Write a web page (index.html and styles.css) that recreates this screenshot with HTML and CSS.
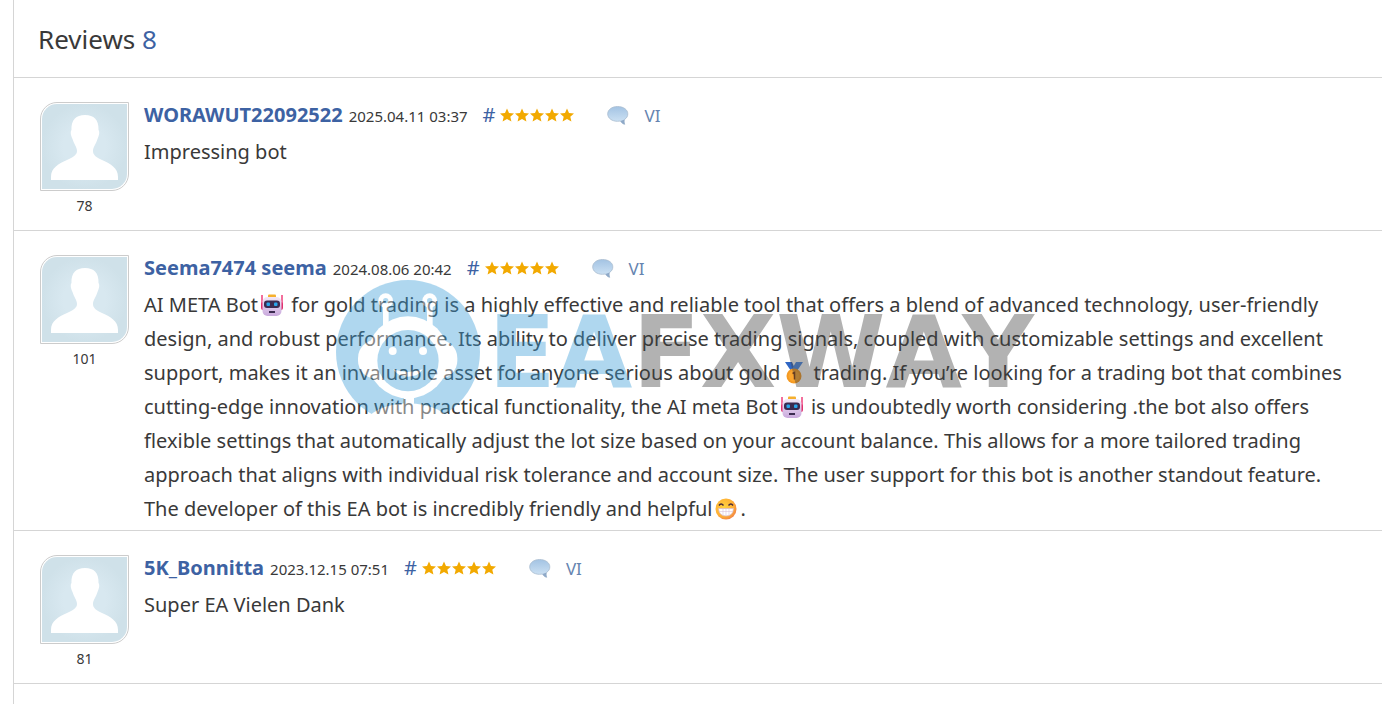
FILE: index.html
```html
<!DOCTYPE html>
<html lang="en">
<head>
<meta charset="UTF-8">
<meta name="viewport" content="width=device-width" />
<title>Reviews</title>
<link rel="stylesheet" href="styles.css">
</head>

<body>
<!-- shapes used more than once -->
<svg class="defs" aria-hidden="true">
  <defs>
    <linearGradient id="bubbleFill" x1="0" y1="0" x2="0" y2="1">
      <stop offset="0" stop-color="#a3c3e3"/>
      <stop offset="1" stop-color="#d3e6f6"/>
    </linearGradient>
    <linearGradient id="robotFill" x1="0" y1="0" x2="0" y2="1">
      <stop offset="0" stop-color="#f3e8f8"/>
      <stop offset="1" stop-color="#c9a9dc"/>
    </linearGradient>
    <radialGradient id="faceFill" cx=".4" cy=".4" r=".65">
      <stop offset="0" stop-color="#ffd340"/>
      <stop offset=".7" stop-color="#ffb035"/>
      <stop offset="1" stop-color="#f08048"/>
    </radialGradient>
    <radialGradient id="avatarFill">
      <stop offset=".5" stop-color="#d8e8f0"/>
      <stop offset="1" stop-color="#cfe1e9"/>
    </radialGradient>
  </defs>
  <symbol id="avatar" viewBox="0 0 89 89">
    <path d="M17 .5H88.500V72A16.500 16.500 0 0 1 72 88.500H.5V17A16.500 16.500 0 0 1 17 .5Z" fill="#fff" stroke="#ccc"/>
    <path d="M17 2H87V72A15 15 0 0 1 72 87H2V17A15 15 0 0 1 17 2Z" fill="url(#avatarFill)"/>
    <path d="M45 13C36 13 31 18 31.500 28C30 30 31 34 32.500 37C34 42 37 45 37 49C37 53 33 55 27 58C18 62 11 66 11 75V78H78V75C78 66 71 62 62 58C56 55 53 53 53 49C53 45 56 42 57.500 37C59 34 60 30 58.500 28C59 18 54 13 45 13Z" fill="#fff"/>
  </symbol>
  <symbol id="stars" viewBox="0 0 75 14">
    <g fill="#f2a900">
      <path id="star" d="M7 0.500L9 5L14 5.500L10.300 8.800L11.400 13.500L7 11L2.600 13.500L3.700 8.800L0 5.500L5 5Z"/>
      <use href="#star" x="15"/>
      <use href="#star" x="30"/>
      <use href="#star" x="45"/>
      <use href="#star" x="60"/>
    </g>
  </symbol>
  <symbol id="bubble" viewBox="0 0 22 20">
    <path d="M10.500 1.500C5 1.500 .7 4.700 .7 8.900C.7 13.200 5 16.300 10.500 16.300L13.500 16C14.500 18 16 19 17.800 19.300C17 17.700 17 16.200 17.500 14.500C19.800 13 20.800 11.200 20.800 8.900C20.800 4.700 16.500 1.500 10.500 1.500Z" fill="url(#bubbleFill)" stroke="#a9bccf" stroke-width=".8"/>
    <path d="M13.500 16C14.500 18 16 19 17.800 19.300C17 17.700 17 16.200 17.500 14.500Z" fill="#8fa9c8"/>
  </symbol>
  <symbol id="robot" viewBox="0 0 24 24">
    <path d="M2 2V12M22 2V12" stroke="#f0407c" stroke-width="1.500"/>
    <rect x="1" y="9" width="22" height="8" rx="2" fill="#e0326e"/>
    <rect x="8" y="1.500" width="8" height="4" rx="1" fill="#f5b02e"/>
    <rect x="2.500" y="4" width="19" height="19" rx="5" fill="url(#robotFill)"/>
    <rect x="4" y="7.500" width="16" height="7.500" rx="3" fill="#3b2b50"/>
    <rect x="6.500" y="9.500" width="3.500" height="3.500" rx="1" fill="#2aa5ea"/>
    <rect x="14" y="9.500" width="3.500" height="3.500" rx="1" fill="#2aa5ea"/>
    <rect x="9" y="18" width="6" height="2" fill="#3b2b50"/>
  </symbol>
</svg>

<main class="panel">
  <h1 class="title">Reviews <span class="count">8</span></h1>

  <article class="review">
    <div class="user">
      <svg class="avatar" role="img" aria-label="WORAWUT22092522"><use href="#avatar"/></svg>
      <span class="rating">78</span>
    </div>
    <div class="content">
      <header class="info">
        <a class="author" href="#worawut">WORAWUT22092522</a>
        <time class="date">2025.04.11 03:37</time>
        <a class="anchor" href="#r1" id="r1">#</a>
        <svg class="stars" role="img" aria-label="5 stars"><use href="#stars"/></svg>
        <svg class="bubble" aria-hidden="true"><use href="#bubble"/></svg>
        <a class="lang" href="#vi">VI</a>
      </header>
      <p class="text">Impressing bot</p>
    </div>
  </article>

  <article class="review">
    <div class="user">
      <svg class="avatar" role="img" aria-label="Seema7474 seema"><use href="#avatar"/></svg>
      <span class="rating">101</span>
    </div>
    <div class="content">
      <header class="info">
        <a class="author" href="#seema">Seema7474 seema</a>
        <time class="date">2024.08.06 20:42</time>
        <a class="anchor" href="#r2" id="r2">#</a>
        <svg class="stars" role="img" aria-label="5 stars"><use href="#stars"/></svg>
        <svg class="bubble" aria-hidden="true"><use href="#bubble"/></svg>
        <a class="lang" href="#vi">VI</a>
      </header>
      <p class="text">AI META Bot<svg class="emoji" role="img" aria-label="robot"><use href="#robot"/></svg>
        for gold trading is a highly effective and reliable tool that offers a blend of advanced technology, user-friendly design, and robust performance. Its ability to deliver precise trading signals, coupled with customizable settings and excellent support, makes it an invaluable asset for anyone serious about gold<svg class="emoji" viewBox="0 0 24 24" role="img" aria-label="gold medal">
          <path d="M3 1H10L13 8L9 10Z" fill="#2f66c4"/>
          <path d="M21 1H14L10 8L15 10Z" fill="#4b8be8"/>
          <circle cx="12" cy="15" r="7.500" fill="#f59a23"/>
          <circle cx="12" cy="15" r="5.500" fill="#fba62f"/>
          <path d="M10.500 12.500L12.500 11.500V18.500" fill="none" stroke="#7d3b10" stroke-width="1.500"/>
        </svg>
        trading. If you’re looking for a trading bot that combines cutting-edge innovation with practical functionality, the AI meta Bot<svg class="emoji" role="img" aria-label="robot"><use href="#robot"/></svg>
        is undoubtedly worth considering .the bot also offers flexible settings that automatically adjust the lot size based on your account balance. This allows for a more tailored trading approach that aligns with individual risk tolerance and account size. The user support for this bot is another standout feature. The developer of this EA bot is incredibly friendly and helpful<svg class="emoji" viewBox="0 0 24 24" role="img" aria-label="beaming face">
          <circle cx="12" cy="12" r="10.500" fill="url(#faceFill)"/>
          <path d="M5 8.500Q7 5.500 9.500 8.500M14.500 8.500Q17 5.500 19 8.500" fill="none" stroke="#4a2b3c" stroke-width="1.500"/>
          <path d="M4.500 11.500H19.500Q19 19 12 19Q5 19 4.500 11.500Z" fill="#fff" stroke="#d9b8c8" stroke-width=".7"/>
          <path d="M5 14.500H19M9 12V18M12 12V19M15 12V18" stroke="#d9c4dc" stroke-width=".6"/>
        </svg>.</p>
    </div>
  </article>

  <article class="review">
    <div class="user">
      <svg class="avatar" role="img" aria-label="5K_Bonnitta"><use href="#avatar"/></svg>
      <span class="rating">81</span>
    </div>
    <div class="content">
      <header class="info">
        <a class="author" href="#bonnitta">5K_Bonnitta</a>
        <time class="date">2023.12.15 07:51</time>
        <a class="anchor" href="#r3" id="r3">#</a>
        <svg class="stars" role="img" aria-label="5 stars"><use href="#stars"/></svg>
        <svg class="bubble" aria-hidden="true"><use href="#bubble"/></svg>
        <a class="lang" href="#vi">VI</a>
      </header>
      <p class="text">Super EA Vielen Dank</p>
    </div>
  </article>
</main>

<div class="watermark">
  <svg class="logo" viewBox="0 0 432 432" aria-hidden="true">
    <circle cx="216" cy="216" r="216" fill="#399dd9"/>
    <g fill="#fff">
      <path d="M141 70H158V140H141ZM273 70H290V140H273Z"/>
      <circle cx="149" cy="62" r="22"/>
      <circle cx="281" cy="62" r="22"/>
      <rect x="66" y="180" width="298" height="116" rx="54"/>
      <circle cx="216" cy="232" r="123"/>
      <path d="M204 345H234V375H204Z"/>
      <ellipse cx="216" cy="432" rx="125" ry="62"/>
    </g>
    <g fill="#399dd9">
      <circle cx="149" cy="62" r="8"/>
      <circle cx="281" cy="62" r="8"/>
      <circle cx="216" cy="242" r="92"/>
    </g>
    <g fill="#fff">
      <circle cx="170" cy="213" r="12"/>
      <circle cx="261" cy="213" r="12"/>
      <path d="M172 268Q216 284 260 268Q248 290 216 290Q184 290 172 268Z"/>
    </g>
  </svg>
  <span class="brand"><span class="ea">EA</span>FXWAY</span>
</div>
</body>
</html>
```
FILE: styles.css
```css
body {
  position: relative;
  min-height: 100vh;
  margin: 0;
  background: #fff;
  color: #393939;
  font: 20px/34px "Noto Sans", "Open Sans", sans-serif;
}
a {
  color: #3d62a3;
  text-decoration: none;
}
.defs {
  position: absolute;
  width: 0;
  height: 0;
}
.panel {
  box-sizing: border-box;
  min-height: 100vh;
  margin-left: 13px;
  border-left: 1px solid #d5d5d5;
}
.title {
  margin: 0;
  padding: 22px 24px 21px;
  font-size: 26px;
  font-weight: normal;
}
.count {
  color: #3d62a3;
}
.review {
  display: flex;
  gap: 15px;
  padding: 24px 26px 4px;
  border-top: 1px solid #d5d5d5;
}
.review:last-child {
  border-bottom: 1px solid #d5d5d5;
}
.user {
  display: flex;
  flex-direction: column;
  align-items: center;
  flex: none;
  min-height: 124px;
}
.avatar {
  width: 89px;
  height: 89px;
}
.rating {
  font-size: 14px;
  line-height: 30px;
}
.content {
  flex: 1;
}
.info {
  display: flex;
  align-items: baseline;
  height: 34px;
  margin-top: -4px;
}
.author {
  font-weight: 700;
}
.date {
  margin: 0 15px 0 6px;
  font-size: 15px;
}
.stars {
  align-self: center;
  width: 75px;
  height: 14px;
  margin: 0 32px 0 5px;
}
.bubble {
  align-self: center;
  width: 22px;
  height: 20px;
}
.lang {
  margin-left: 15px;
  color: #6684b0;
  font-size: 17px;
}
.text {
  margin: 3px 0 0;
}
.emoji {
  width: 24px;
  height: 24px;
  margin: 0 2px;
  vertical-align: -5px;
}

/* lies over the whole page, centred */
.watermark {
  position: absolute;
  inset: 0;
  display: flex;
  align-items: center;
  justify-content: center;
  gap: 8px;
  padding-right: 12px;
  opacity: .4;
  pointer-events: none;
}
.logo {
  width: 144px;
  height: 144px;
}
.brand {
  color: #404040;
  font: bold 99px/99px "DejaVu Sans", sans-serif;
  font-kerning: none;
}
.ea {
  color: #399dd9;
}
```
